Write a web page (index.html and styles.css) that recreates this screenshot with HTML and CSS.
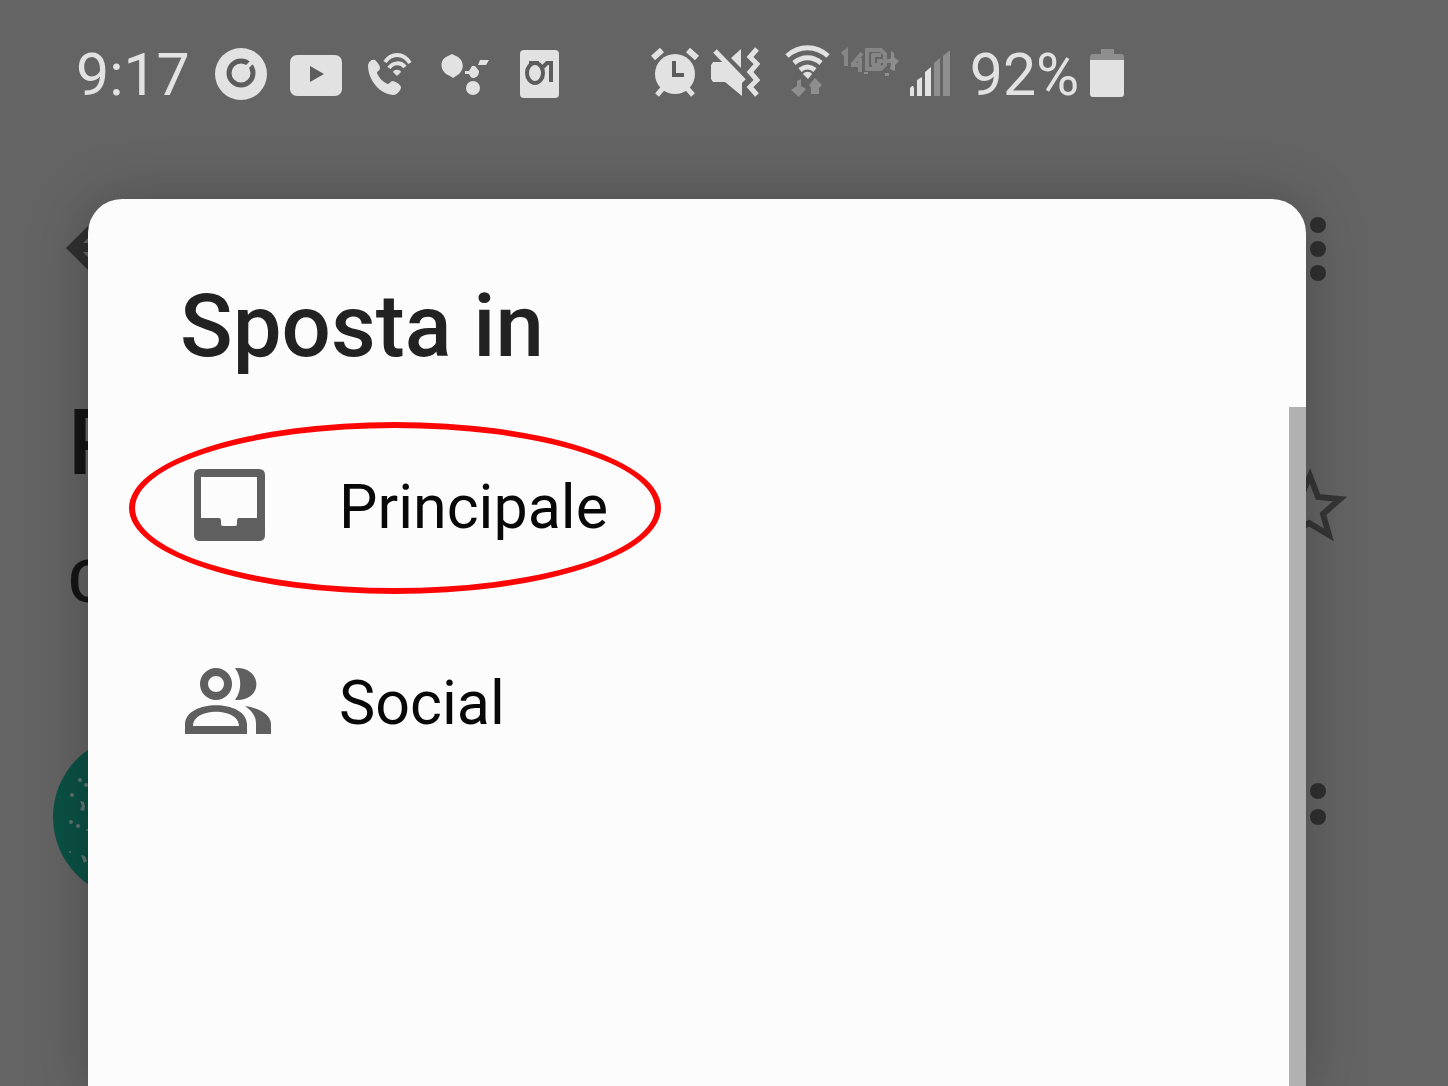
FILE: index.html
```html
<!DOCTYPE html>
<html lang="it">
<head>
    <meta charset="UTF-8">
    <meta name="viewport" content="width=device-width, initial-scale=1">
    <title>Sposta in</title>
    <link rel="stylesheet" href="styles.css">
</head>
<body>
    <header class="status-bar">
        <span class="clock">9:17</span>
        <div class="notifications">
            <svg width="52" height="60" viewBox="0 0 52 60">
                <circle class="light" cx="26" cy="29" r="26"/>
                <circle class="cut" stroke-width="5" cx="26" cy="28" r="12"/>
                <path class="line" stroke-width="4" d="M30 24l9-9"/>
            </svg>
            <svg width="52" height="60" viewBox="0 0 52 60">
                <rect class="light" y="10" width="52" height="41" rx="7"/>
                <path class="dark" d="M20 21v16l14-8z"/>
            </svg>
            <svg width="52" height="60" viewBox="0 0 52 60">
                <path class="light" d="M3 20C4 16 7 14 10 15c2 2 5 5 5 8 0 3-3 3-3 5 2 5 6 9 11 11 2 0 2-3 5-3 3 1 7 3 8 6 0 3-3 7-7 8C16 50 3 36 3 20z"/>
                <path class="line" stroke-width="4" d="M20 17C26 8 38 7 45 18M24 23c4-6 12-6 16-1"/>
                <path class="light" d="M28 27c1-3 7-3 8 0l-4 4z"/>
            </svg>
            <svg width="52" height="60" viewBox="0 0 52 60">
                <path class="light" d="M12 9l4 2c9 4 9 15 0 20l-3 2-3-2C-1 27-1 14 8 11z"/>
                <path class="light" d="M25 26h4l3-5h3l4 5c0 5-3 7-6 7-2 0-3-2-4-4h-4z"/>
                <circle class="light" cx="33" cy="43" r="7"/>
                <path class="light" d="M40 15h9l-3 5h-8z"/>
            </svg>
            <svg width="52" height="60" viewBox="0 0 52 60">
                <rect class="light" x="5" y="5" width="39" height="48" rx="4"/>
                <ellipse class="cut" stroke-width="4" cx="20" cy="28" rx="8" ry="10"/>
                <path class="cut" stroke-width="4" d="M14 18h10M28 22l4-4h4v19"/>
            </svg>
        </div>
        <div class="system">
            <svg width="50" height="60" viewBox="0 0 50 60">
                <circle class="light" cx="25" cy="30" r="20"/>
                <path class="line" stroke-width="6" d="M3 14l9-8M38 6l9 8"/>
                <path class="line" stroke-width="5" d="M7 51l7-8M43 51l-7-8"/>
                <path class="cut" stroke-width="4" d="M24 17v14h10"/>
            </svg>
            <svg width="50" height="60" viewBox="0 0 50 60">
                <path class="light" d="M3 18h12l17 19v15L15 38H3l-2-3V21z"/>
                <path class="line" stroke-width="5" d="M5 7l29 30"/>
                <path class="light" d="M21 14l10-9v19z"/>
                <path class="line" stroke-width="5" d="M47 5l-7 8 7 7-7 8 7 8-7 7 7 8"/>
            </svg>
            <svg width="60" height="60" viewBox="0 0 60 60">
                <path class="line" stroke-width="5" d="M17 12C29 1 46 1 58 12M24 19c8-7 19-7 27 0M30 26c5-4 10-4 15 0"/>
                <path class="light" d="M33 30c2-3 7-3 9 0l-4 5z"/>
                <path class="faint" d="M27 37l4-2v7l5 3-7 8-8-7 6-4zM45 34l7 7-3 3v6h-8v-6l-2-3z"/>
            </svg>
            <svg width="60" height="60" viewBox="0 0 60 60">
                <path class="ghost" stroke-width="4" d="M2 10l4-3v15M22 9L12 21M11 21h8M20 14v14"/>
                <path class="ghost" stroke-width="4" d="M27 4v21h14l4-4v-6M27 6h14l4 4v5M33 10v11M32 11h9M37 17h14M32 21h9"/>
                <path class="faint" d="M51 7l3 2v4l5 4-4 4v6l-5-2 1-6-2-3 2-2zM45 29h4v3h-4zM24 28h4v2h-4z"/>
            </svg>
            <svg width="40" height="60" viewBox="0 0 40 60">
                <path class="light" d="M0 52v-8l2-2h1l1 2v8zM7 52V36l5-3v19zM15 52V28l6-5v29z"/>
                <path class="faint" d="M24 52V19l6-5v38zM33 52V12l6-5h1v45z"/>
            </svg>
            <span class="percent">92%</span>
            <svg width="34" height="60" viewBox="0 0 34 60">
                <path class="faint" d="M11 5h13v5h7q3 0 3 3v4H0v-4q0-3 3-3h8z"/>
                <path class="light" d="M0 16h34v34q0 3-3 3H3q-3 0-3-3z"/>
            </svg>
        </div>
    </header>

    <!-- open mail, behind the dialog -->
    <main class="mail">
        <div class="toolbar">
            <button class="icon-button" aria-label="Indietro">
                <svg width="98" height="98" viewBox="0 0 98 98"><path d="M82 44H33l22-22-6-6-33 33 33 33 6-6-22-23h49z"/></svg>
            </button>
            <button class="icon-button" aria-label="Altre opzioni">
                <svg width="60" height="66" viewBox="0 0 60 66"><circle cx="30" cy="10" r="8"/><circle cx="30" cy="34" r="8"/><circle cx="30" cy="58" r="8"/></svg>
            </button>
        </div>
        <div class="subject">
            <div>
                <h1>P</h1>
                <p>C</p>
            </div>
            <button class="icon-button star" aria-label="Speciali">
                <svg width="80" height="80" viewBox="0 0 80 80"><path class="star-line" d="M42 8l8 21 22 2-17 15 6 21-20-12-20 11 5-23L9 29l24-1z"/></svg>
            </button>
        </div>
        <div class="message">
            <svg class="avatar" width="164" height="164" viewBox="0 0 164 164">
                <circle class="avatar-disc" cx="82" cy="82" r="82"/>
                <g class="avatar-specks">
                    <circle cx="27" cy="45" r="2"/><circle cx="33" cy="50" r="2"/><circle cx="19" cy="60" r="2"/>
                    <path d="M27 66l4 1 1 5-1 4-4-1 2-4z"/>
                    <circle cx="18" cy="87" r="2"/><circle cx="25" cy="91" r="2"/><circle cx="34" cy="95" r="1"/>
                    <circle cx="17" cy="117" r="1"/><path d="M28 120l4 1 2 5-3 2z"/>
                </g>
            </svg>
            <button class="icon-button" aria-label="Altro">
                <svg width="60" height="68" viewBox="0 0 60 68"><circle cx="30" cy="8" r="8"/><circle cx="30" cy="34" r="8"/></svg>
            </button>
        </div>
    </main>

    <section class="dialog" role="dialog" aria-labelledby="dialogTitle">
        <h2 id="dialogTitle">Sposta in</h2>
        <div class="dialog-body">
            <div class="labels">
                <button class="label-item marked">
                    <svg width="88" height="88" viewBox="0 0 88 88"><path fill-rule="evenodd" d="M16 6h59q6 0 6 6v60q0 6-6 6H16q-6 0-6-6V12q0-6 6-6zM17 14v41h18q2 0 2 3v3q0 2 2 2h12q2 0 2-2v-3q0-3 2-3h18V14z"/></svg>
                    Principale
                </button>
                <button class="label-item">
                    <svg width="88" height="88" viewBox="0 0 88 88">
                        <circle class="ring" cx="32" cy="25" r="12"/>
                        <path d="M51 9c28-2 29 34 0 32 7-10 7-22 0-32z"/>
                        <path fill-rule="evenodd" d="M1 75V65C2 40 62 40 63 65v10zM9 67h46C55 48 9 48 9 67z"/>
                        <path d="M61 47c14 2 26 9 26 18v10H72V65c0-8-4-13-11-18z"/>
                    </svg>
                    Social
                </button>
            </div>
            <div class="scrollbar"></div>
        </div>
    </section>
</body>
</html>
```
FILE: styles.css
```css
*, *::after {
    box-sizing: border-box;
}
body {
    margin: 0;
    min-height: 100vh;
    position: relative;
    background: #646464;
    font-family: Roboto, "Liberation Sans", sans-serif;
    color: #151515;
}
h1, h2, p {
    margin: 0;
    font-weight: 500;
}
svg {
    display: block;
    flex: none;
}
button {
    border: none;
    background: none;
    padding: 0;
    font: inherit;
    color: inherit;
    cursor: pointer;
}

/* status bar */
.status-bar {
    display: flex;
    align-items: center;
    height: 150px;
    padding-left: 76px;
    color: #e2e2e2;
    font-size: 59px;
    line-height: 62px;
}
.notifications {
    display: flex;
    gap: 23px;
    margin-left: 25px;
}
.system {
    display: flex;
    gap: 10px;
    margin-left: 83px;
}
.percent {
    margin: 0 1px 0 10px;
}
.light {
    fill: #e2e2e2;
}
.dark {
    fill: #5c5c5c;
}
.faint {
    fill: #8e8e8e;
}
.line, .cut, .ghost {
    fill: none;
    stroke: #e2e2e2;
}
.cut {
    stroke: #5c5c5c;
}
.ghost {
    stroke: #868686;
}

/* mail behind */
.icon-button {
    fill: #303030;
}
.toolbar {
    display: flex;
    align-items: center;
    justify-content: space-between;
    height: 196px;
    padding: 0 100px 0 50px;
}
.subject {
    display: flex;
    align-items: flex-start;
    justify-content: space-between;
    padding: 2px 100px 0 68px;
}
.subject h1 {
    font-size: 90px;
    line-height: 192px;
}
.subject p {
    font-size: 60px;
    line-height: 84px;
}
.star {
    margin-top: 120px;
}
.star-line {
    fill: none;
    stroke: #363636;
    stroke-width: 6;
}
.message {
    display: flex;
    align-items: center;
    justify-content: space-between;
    height: 386px;
    padding: 0 100px 0 53px;
}
.avatar-disc {
    fill: #0b5145;
}
.avatar-specks {
    fill: #5f7570;
}

/* dialog */
.dialog {
    position: absolute;
    top: 199px;
    right: 142px;
    bottom: 0;
    left: 88px;
    display: flex;
    flex-direction: column;
    overflow: hidden;
    background: #fcfcfc;
    border-radius: 34px 34px 0 0;
    box-shadow: 0 4px 60px rgba(0, 0, 0, 0.25);
}
.dialog h2 {
    padding: 77px 92px 31px;
    font-size: 87px;
    line-height: 100px;
    color: #222;
}
.dialog-body {
    display: flex;
    flex: 1;
}
.labels {
    flex: 1;
    padding-top: 2px;
}
.label-item {
    position: relative;
    display: flex;
    align-items: center;
    gap: 67px;
    width: 100%;
    height: 196px;
    padding-left: 96px;
    font-size: 61px;
    color: #080808;
    fill: #5f5f5f;
}
.ring {
    fill: none;
    stroke: #5f5f5f;
    stroke-width: 8;
}
/* red ring around the label to pick */
.marked::after {
    content: "";
    position: absolute;
    top: 13px;
    left: 41px;
    width: 532px;
    height: 172px;
    border: 6px solid #fb0505;
    border-radius: 50%;
}
.scrollbar {
    width: 17px;
    background: #b1b1b2;
}
```
